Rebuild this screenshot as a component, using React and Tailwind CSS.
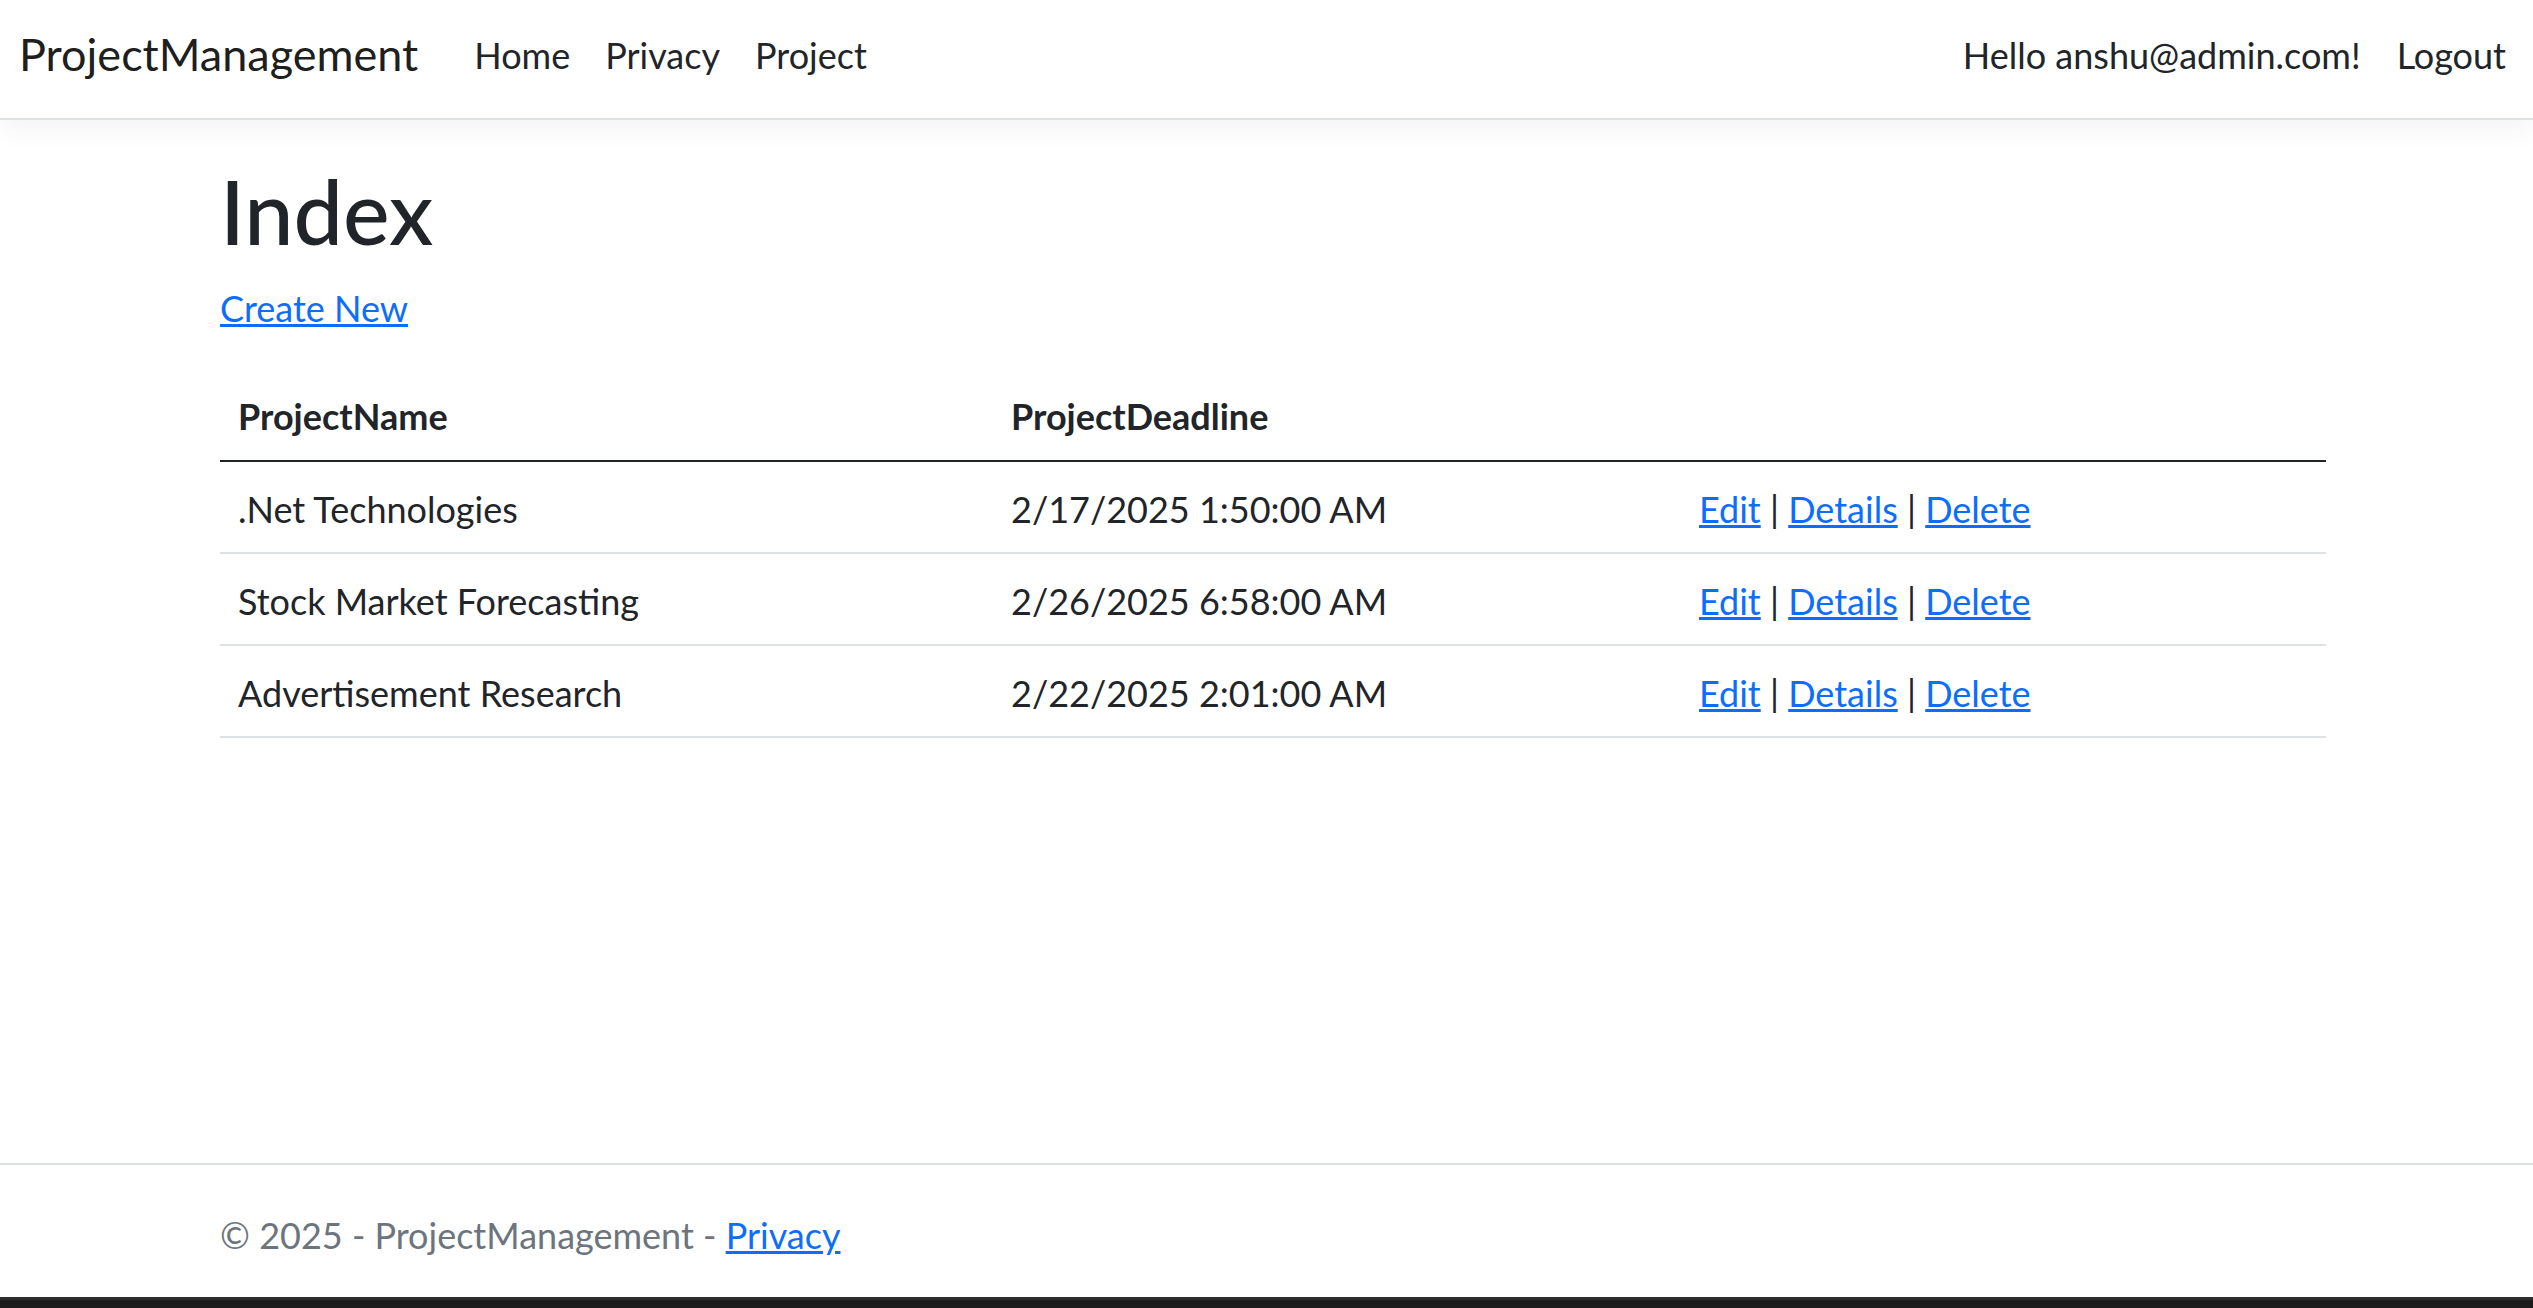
import React from "react";

const projects = [
  { name: ".Net Technologies", deadline: "2/17/2025 1:50:00 AM" },
  { name: "Stock Market Forecasting", deadline: "2/26/2025 6:58:00 AM" },
  { name: "Advertisement Research", deadline: "2/22/2025 2:01:00 AM" },
];

function Navbar() {
  return (
    <nav className="relative z-10 h-[120px] bg-white border-b-2 border-[#dee2e6] shadow-[0_9px_27px_rgba(0,0,0,0.05)]">
      <div className="flex items-center h-[110px] pl-[19px] pr-[9px]">
        <a className="text-[45px] leading-[1.5] text-black/90 mr-[38px]">ProjectManagement</a>
        <ul className="flex items-center">
          <li><a className="px-[18px] text-[36px] leading-[1.5] text-[#212529]">Home</a></li>
          <li><a className="px-[17px] text-[36px] leading-[1.5] text-[#212529]">Privacy</a></li>
          <li><a className="px-[18px] text-[36px] leading-[1.5] text-[#212529]">Project</a></li>
        </ul>
        <ul className="ml-auto flex items-center">
          <li><span className="px-[18px] text-[36px] leading-[1.5] text-[#212529]">Hello anshu@admin.com!</span></li>
          <li><a className="px-[18px] text-[36px] leading-[1.5] text-[#212529]">Logout</a></li>
        </ul>
      </div>
    </nav>
  );
}

function ProjectTable() {
  return (
    <table className="w-full border-collapse text-[36px] leading-[1.5] text-[#212529]">
      <colgroup>
        <col className="w-[773px]" />
        <col className="w-[688px]" />
        <col />
      </colgroup>
      <thead>
        <tr className="border-b-2 border-[#212529]">
          <th className="px-[18px] pt-[19px] pb-[17px] text-left font-bold">ProjectName</th>
          <th className="px-[18px] pt-[19px] pb-[17px] text-left font-bold">ProjectDeadline</th>
          <th className="px-[18px] pt-[19px] pb-[17px]"></th>
        </tr>
      </thead>
      <tbody>
        {projects.map((p) => (
          <tr key={p.name} className="border-b-2 border-[#dee2e6]">
            <td className="px-[18px] pt-[20px] pb-[16px]">{p.name}</td>
            <td className="px-[18px] pt-[20px] pb-[16px]">{p.deadline}</td>
            <td className="px-[18px] pt-[20px] pb-[16px]">
              <a className="text-[#0d6efd] underline">Edit</a> |{" "}
              <a className="text-[#0d6efd] underline">Details</a> |{" "}
              <a className="text-[#0d6efd] underline">Delete</a>
            </td>
          </tr>
        ))}
      </tbody>
    </table>
  );
}

export default function App() {
  return (
    <div className="min-h-[1308px] flex flex-col bg-white font-[Lato,'Open_Sans',sans-serif] text-[#212529]">
      <Navbar />

      <main className="flex-1 pt-[39px]">
        <div className="ml-[220px] w-[2106px]">
          <h1 className="text-[88px] leading-[1.2] font-medium mb-[16px]">Index</h1>
          <p className="text-[36px] leading-[1.5] mb-[35px]">
            <a className="text-[#0d6efd] underline">Create New</a>
          </p>
          <ProjectTable />
        </div>
      </main>

      {/* footer */}
      <footer className="h-[134px] border-t-2 border-[#dee2e6] whitespace-nowrap">
        <div className="ml-[220px] pt-[5px] text-[36px] leading-[130px] text-[#6c757d]">
          © 2025 - ProjectManagement - <a className="text-[#0d6efd] underline">Privacy</a>
        </div>
      </footer>
      <div className="h-[11px] border-t-[3px] border-[#2e2e2e] bg-[#1c1c1c]"></div>
    </div>
  );
}
